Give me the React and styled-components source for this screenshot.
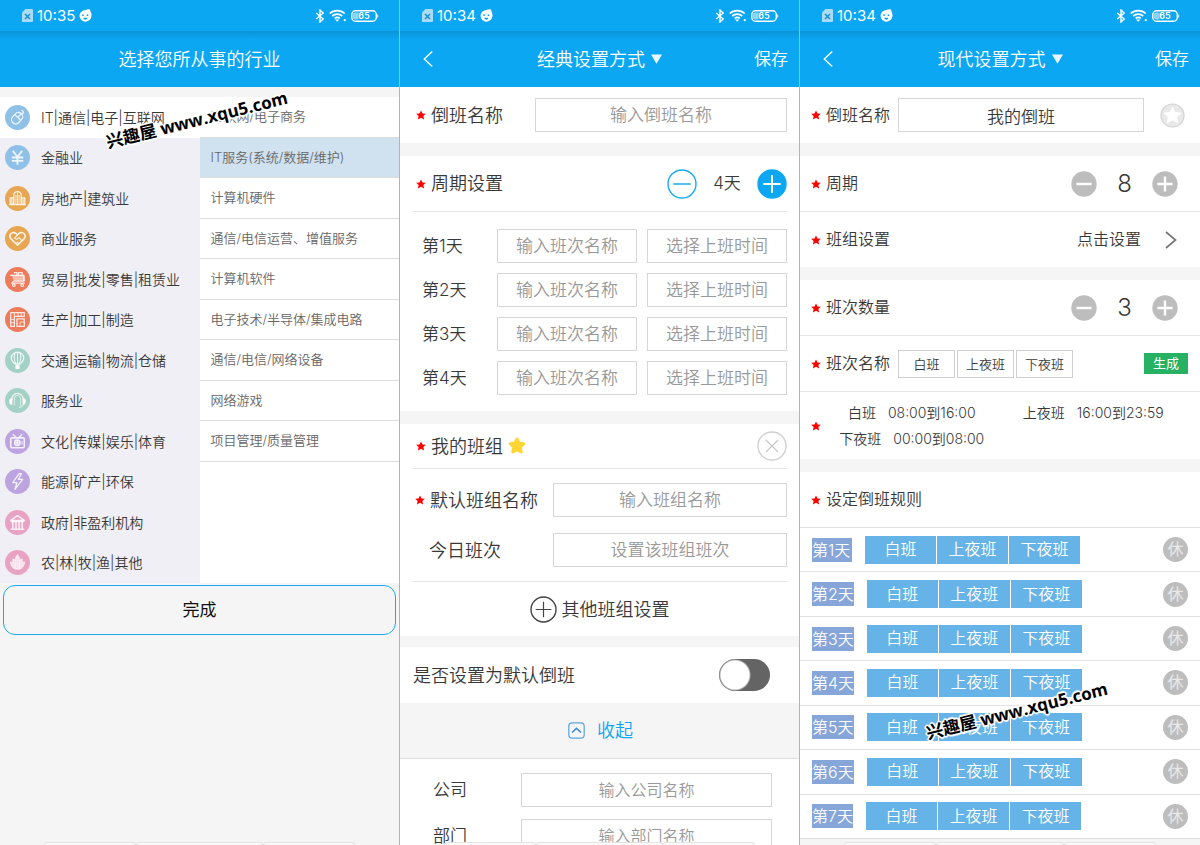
import React, { useState } from "react";
import styled, { createGlobalStyle, css } from "styled-components";

const GlobalStyle = createGlobalStyle`
  * {
    box-sizing: border-box;
  }
  body {
    margin: 0;
    background: #f5f5f5;
    color: #383838;
    font-family: Inter, "Noto Sans CJK SC", sans-serif;
    font-weight: 350;
    line-height: 27px;
  }
  button,
  input {
    margin: 0;
    padding: 0;
    border: 0;
    background: none;
    color: inherit;
    font: inherit;
  }
  button {
    cursor: pointer;
  }
  svg {
    display: block;
    flex: none;
  }
`;

const Screens = styled.main`
  display: grid;
  grid-template-columns: repeat(3, 1fr);
  height: 100vh;
  overflow: hidden;
`;

const Phone = styled.section`
  position: relative;
  min-width: 0;
  overflow: hidden;
  background: #f5f5f5;

  &:not(:last-child) {
    border-right: 1px solid #b4b4b4;
  }
`;

const StatusBar = styled.div`
  display: flex;
  align-items: center;
  justify-content: space-between;
  height: 31px;
  padding: 0 20px 0 22px;
  background: #0ca7f3;
  color: #fff;
  font-size: 15px;
  font-weight: 400;
`;

const StatusGroup = styled.div`
  display: flex;
  align-items: center;
  gap: 4px;
`;

const TopBar = styled.header`
  display: grid;
  grid-template-columns: 60px 1fr 60px;
  align-items: center;
  height: 56px;
  background: linear-gradient(#0a93d8, #0ca7f3 8px);
  color: #fff;
`;

const Title = styled.h1`
  margin: 0;
  grid-column: 2;
  text-align: center;
  font-size: 18px;
  font-weight: 350;
`;

const TitleButton = styled.button`
  display: inline-flex;
  align-items: center;
  gap: 6px;
`;

const BackButton = styled.button`
  display: flex;
  justify-content: center;
  width: 56px;
`;

const SaveButton = styled.button`
  justify-self: end;
  margin-right: 11px;
  font-size: 17px;
`;

/* ---- industry picker ---- */

const Picker = styled.div`
  display: grid;
  grid-template-columns: 1fr 1fr;
  margin-top: 10px;
  min-height: 486px;
  background: #fff;
`;

const PickerColumn = styled.div`
  display: grid;
  grid-template-rows: repeat(12, 1fr);
  background: ${(p) => (p.$main ? "#efeff5" : "#fff")};
`;

const IndustryItem = styled.button`
  display: flex;
  align-items: center;
  gap: 11px;
  padding-left: 5px;
  background: ${(p) => (p.$active ? "#fff" : "transparent")};
  font-size: 14px;
  text-align: left;
  white-space: nowrap;
`;

const SubItem = styled.button`
  padding-left: 11px;
  border-bottom: 1px solid #dcdcdc;
  background: ${(p) => (p.$active ? "#d0e1f0" : "#fff")};
  color: #666;
  font-size: 13px;
  text-align: left;
  white-space: nowrap;
`;

const DoneButton = styled.button`
  display: block;
  width: calc(100% - 6px);
  height: 50px;
  margin: 2px 3px;
  border: 1px solid #1aabee;
  border-radius: 12px;
  color: #111;
  font-size: 17px;
  font-weight: 400;
`;

/* ---- forms ---- */

const Card = styled.div`
  background: #fff;
  margin-bottom: ${(p) => p.$gap ?? 13}px;
`;

const Row = styled.div`
  display: flex;
  align-items: center;
  height: ${(p) => p.$h || 55}px;
  padding: 0 ${(p) => p.$right ?? 12}px 0 ${(p) => p.$left ?? 16}px;
  font-size: ${(p) => p.$size || 18}px;
`;

const Divider = styled.hr`
  height: 1px;
  margin: 0 ${(p) => (p.$full ? 0 : "12px")} 0 ${(p) => (p.$full ? 0 : "13px")};
  border: 0;
  background: #e6e6e6;
`;

const Label = styled.label`
  display: flex;
  align-items: center;
  gap: 5px;
  flex: none;
  width: ${(p) => (p.$w ? `${p.$w}px` : "auto")};
  padding-left: ${(p) => p.$indent || 0}px;
  white-space: nowrap;
`;

const fieldBox = css`
  flex: 1;
  min-width: 0;
  width: 100%;
  height: 34px;
  border: 1px solid #d6d6d6;
  text-align: center;
  font-size: ${(p) => p.$size || 17}px;
`;

const Field = styled.input`
  ${fieldBox}
  &::placeholder {
    color: #999;
    opacity: 1;
  }
`;

const FieldButton = styled.button`
  ${fieldBox}
  color: #999;
`;

const Stack = styled.div`
  display: flex;
  flex-direction: column;
  gap: ${(p) => p.$gap}px;
  padding: ${(p) => p.$pad};
`;

const FieldPair = styled.div`
  display: flex;
  flex: 1;
  gap: 10px;
`;

const Push = styled.div`
  display: flex;
  align-items: center;
  margin-left: auto;
`;

const Count = styled.output`
  min-width: ${(p) => (p.$big ? 55 : 60)}px;
  text-align: center;
  font-size: ${(p) => (p.$big ? 24 : 17)}px;
`;

const AddGroup = styled.button`
  display: flex;
  align-items: center;
  justify-content: center;
  gap: 5px;
  width: 100%;
  height: 54px;
  font-size: 18px;
`;

const Switch = styled.input`
  appearance: none;
  width: 51px;
  height: 32px;
  border-radius: 16px;
  background: radial-gradient(circle at 16px 16px, #fff 14px, #646464 16px);
  cursor: pointer;

  &:checked {
    background: radial-gradient(circle at 35px 16px, #fff 14px, #0ca7f3 16px);
  }
`;

const Collapse = styled.button`
  display: flex;
  align-items: center;
  justify-content: center;
  gap: 12px;
  width: 100%;
  height: 56px;
  padding-left: 2px;
  border-bottom: 1px solid #dedede;
  color: #0ca7f3;
  font-size: 18px;
`;

const IconButton = styled.button`
  flex: none;
`;

const NameField = styled.input`
  width: 57px;
  height: 28px;
  border: 1px solid #cfcfcf;
  text-align: center;
  font-size: 13px;
`;

const NameFields = styled.div`
  display: flex;
  gap: 2px;
`;

const Generate = styled.button`
  width: 44px;
  height: 21px;
  background: #27b163;
  color: #fff;
  font-size: 13px;
  font-weight: 400;
  line-height: 21px;
`;

const TimeGrid = styled.div`
  display: grid;
  flex: 1;
  grid-template-columns: 1fr 1fr;
  line-height: 26px;
  font-size: 14px;
`;

const TimeItem = styled.span`
  display: flex;
  justify-content: center;
  gap: 12px;
  white-space: nowrap;
`;

const Rules = styled.div`
  display: grid;
  grid-auto-rows: 1fr;
  min-height: 312px;
  background: #fff;
  border-top: 1px solid #e2e2e2;
`;

const RuleRow = styled.div`
  display: flex;
  align-items: center;
  padding: 0 12px;
  border-bottom: 1px solid #e2e2e2;
  color: #fff;
  font-size: 16px;
`;

const RuleTitle = styled(Row)`
  background: #fff;
`;

const DayTag = styled.span`
  min-width: 40px;
  margin-right: 13px;
  background: #86a6d9;
  line-height: 24px;
`;

const ShiftCell = styled.button`
  width: 71px;
  height: 28px;
  margin-right: 1px;
  background: #66b3e7;
`;

const RestButton = styled.button`
  width: 25px;
  height: 25px;
  margin-left: auto;
  border-radius: 50%;
  background: #bdbdbd;
  color: #e9e9e9;
  font-weight: 400;
  line-height: 25px;
`;

/* ---- things lying over the screens ---- */

const Stamp = styled.div`
  position: absolute;
  left: ${(p) => p.$x}px;
  top: ${(p) => p.$y}px;
  transform: translate(-50%, -50%) rotate(-14deg);
  color: #000;
  font-family: "Open Sans", "Noto Sans CJK SC", sans-serif;
  font-size: 17px;
  font-weight: 700;
  line-height: 24px;
  white-space: nowrap;
  text-shadow: 1px 1px 0 #fff, -1px 1px 0 #fff, 1px -1px 0 #fff, -1px -1px 0 #fff,
    0 2px 1px #fff, 0 -2px 1px #fff, 2px 0 1px #fff, -2px 0 1px #fff;
  pointer-events: none;
`;

const SheetTabs = styled.div`
  position: absolute;
  left: 44px;
  right: 44px;
  bottom: 0;
  display: grid;
  grid-template-columns: 92fr 127fr 92fr;
  height: 3px;

  span {
    border: 1px solid #e4e4e4;
    border-bottom: 0;
    border-radius: 3px 3px 0 0;
    background: #fafafa;
  }
`;

/* ---- drawings ---- */

const SimIcon = () => (
  <svg width="11" height="13" viewBox="0 0 11 13">
    <path d="M3.5 0H10a1 1 0 0 1 1 1v11a1 1 0 0 1-1 1H1a1 1 0 0 1-1-1V3.5z" fill="#a8dcf8" />
    <path d="M3 5l5 5M8 5l-5 5" stroke="#1b8fd0" strokeWidth="1.5" />
  </svg>
);

const FaceIcon = () => (
  <svg width="13" height="13" viewBox="0 0 13 13">
    <path d="M6.5 1C8 1 8.600 0.200 10 0.300c1.200 0.100 1.600 1.100 1.300 2.300 0.900 1 1.300 2.200 1.200 3.900A6 6 0 1 1 .5 6.800 6 6 0 0 1 6.500 1z" fill="#fff" />
    <circle cx="4" cy="6.200" r="0.900" fill="#0ca7f3" />
    <circle cx="8.500" cy="6.200" r="0.900" fill="#0ca7f3" />
    <path d="M4.300 8.700h4a2 2 0 0 1-4 0z" fill="#0ca7f3" />
  </svg>
);

const BluetoothIcon = () => (
  <svg width="10" height="14" viewBox="0 0 10 14">
    <path d="M1.200 4l7 6L5 13V1l3.200 3-7 6" fill="none" stroke="#fff" strokeWidth="1.400" />
  </svg>
);

const WifiIcon = () => (
  <svg width="18" height="13" viewBox="0 0 18 13">
    <g fill="none" stroke="#fff" strokeWidth="1.700">
      <path d="M0.700 4.500a11 11 0 0 1 15 0" />
      <path d="M3.200 7a7.500 7.500 0 0 1 10 0" />
      <path d="M5.600 9.400a4 4 0 0 1 5.200 0" />
    </g>
    <path d="M6 10.600h4.400l-2.200 2.200z" fill="#fff" />
    <circle cx="15.800" cy="11.200" r="1.100" fill="#fff" />
  </svg>
);

const BatteryIcon = () => (
  <svg width="28" height="12" viewBox="0 0 28 12">
    <rect x="0.800" y="0.800" width="24.500" height="10.400" rx="3.800" fill="none" stroke="#fff" strokeWidth="1.400" />
    <path d="M4 2.500h3.500v7H4a2 2 0 0 1-2-2v-3a2 2 0 0 1 2-2z" fill="#8ed3f8" />
    <path d="M26.300 4a2.500 2.500 0 0 1 0 4z" fill="#fff" />
    <text x="13" y="9.200" fill="#fff" fontSize="9" fontWeight="600" textAnchor="middle">65</text>
  </svg>
);

const BackIcon = () => (
  <svg width="10" height="16" viewBox="0 0 10 16" fill="none" stroke="#fff" strokeWidth="1.300">
    <path d="M9.300 0.500L1.200 8l8.100 7.500" />
  </svg>
);

const TriangleIcon = () => (
  <svg width="11" height="10" viewBox="0 0 11 10">
    <path d="M0 0.500h11L5.500 9.800z" fill="#e8f7ff" />
  </svg>
);

const Required = () => (
  <svg width="10" height="10" viewBox="0 0 10 10" aria-label="必填">
    <path d="M5 0.500l1.500 2.900 3.300.4-2.400 2.200.7 3.400L5 7.800 1.900 9.400l.7-3.400L.2 3.800l3.300-.4z" fill="#ff0000" />
  </svg>
);

const GoldStar = () => (
  <svg width="18" height="18" viewBox="0 0 18 18">
    <path
      d="M9 2l2 4 4.700.7-3.300 3.500.8 4.800L9 12.900 4.800 15l.8-4.800-3.300-3.500L7 6z"
      fill="#fdd535"
      stroke="#fdd535"
      strokeWidth="3"
      strokeLinejoin="round"
    />
  </svg>
);

const StarBadge = () => (
  <svg width="25" height="25" viewBox="0 0 25 25">
    <circle cx="12.500" cy="12.500" r="11.500" fill="#e9e9e9" stroke="#d2d2d2" strokeWidth="1.200" />
    <path d="M12.500 4l2.500 5.500 6 .6-4.500 4 1.300 5.900-5.300-3.100L7.200 20l1.300-5.900-4.500-4 6-.6z" fill="#fff" stroke="#fff" strokeLinejoin="round" />
  </svg>
);

const RoundIcon = ({ size, fill = "none", ring, mark, width = 1.5, kind }) => {
  const c = size / 2;
  const r = size * 0.29;
  return (
    <svg width={size} height={size} viewBox={`0 0 ${size} ${size}`} fill="none" strokeWidth={width}>
      <circle cx={c} cy={c} r={c - 1} fill={fill} stroke={ring} strokeWidth="1.400" />
      {kind === "close" ? (
        <path d={`M${c - 6} ${c - 6}L${c + 6} ${c + 6}M${c + 6} ${c - 6}L${c - 6} ${c + 6}`} stroke={mark} />
      ) : (
        <path d={`M${c - r} ${c}H${c + r}${kind === "plus" ? `M${c} ${c - r}V${c + r}` : ""}`} stroke={mark} />
      )}
    </svg>
  );
};

const CollapseIcon = () => (
  <svg width="17" height="17" viewBox="0 0 17 17" fill="none">
    <rect x="0.800" y="0.800" width="15.400" height="15.400" rx="3.500" stroke="#5aa6dc" strokeWidth="1.200" />
    <path d="M4 10.500l4.500-4.200 4.500 4.200" stroke="#3c8fd0" strokeWidth="1.600" />
  </svg>
);

const ArrowIcon = () => (
  <svg width="12" height="18" viewBox="0 0 12 18" fill="none" stroke="#777" strokeWidth="1.700">
    <path d="M1 1l9.500 8L1 17" />
  </svg>
);

const glyphs = {
  mouse: (
    <g>
      <g transform="rotate(42 12 13)">
        <rect x="7.500" y="7" width="8" height="12" rx="4" />
        <path d="M7.500 12h8M11.500 7v5" />
      </g>
      <path d="M15.500 9c.5-1.200 2.500-.6 2.200-2.200-.2-1-1.200-.9-1.500-2" />
    </g>
  ),
  yen: <path d="M7.500 5.500l4.500 6L16.500 5.500M12 11.500V19M6.500 12h11M6.500 15.200h11" strokeWidth="1.800" />,
  building: (
    <g>
      <path d="M5 17.500v-6h3v6zM16 17.500v-6h3v6zM8.500 17.500V8.500a3.500 3.200 0 0 1 7 0v9M4 17.800h16" />
      <path d="M10.500 8.500v9M13.500 8.500v9M12 6v11.500M6.500 12v5M17.500 12v5" strokeWidth="0.900" />
    </g>
  ),
  heart: (
    <g strokeWidth="1.500">
      <path d="M12 18.300l-6.500-6.200a3.700 3.700 0 0 1 0-4.600c1.700-1.900 4.400-1.500 6.500 1 2.100-2.500 4.800-2.900 6.500-1a3.700 3.700 0 0 1 0 4.600z" />
      <path d="M12 8.500l-2.700 3.200 2 1 2.200-1.500 3 3.300M11 15.500l2.500 1.300" strokeWidth="1.100" />
    </g>
  ),
  cart: (
    <g>
      <path d="M6.500 8h11.500v5.500H8.500" fill="#fff" fillOpacity="0.500" />
      <path d="M8.500 5.500h3v2.500M13 8V5.500h3.500V8M8.500 13.500l-2 2H19M18 8l.5 5.500M5 8h2" />
      <circle cx="8.500" cy="17.500" r="1.200" />
      <circle cx="16.500" cy="17.500" r="1.200" />
    </g>
  ),
  plan: (
    <g>
      <path d="M5.500 5.500h13v3.500H9V18.500H5.500zM11.500 11.500h7v7h-7z" />
      <path d="M9 5.500V9M12.500 5.500V9M15.500 5.500V9M5.500 12H9M5.500 15H9M14.500 18.500v-4h4" strokeWidth="0.800" />
    </g>
  ),
  balloon: (
    <g>
      <path d="M10 15.500C7.500 13.500 6 11.800 6 9.500a6 5.500 0 0 1 12 0c0 2.300-1.500 4-4 6z" />
      <path d="M12 4v11.500M9.500 4.800c-1 3.200-.8 7 1 10.700M14.500 4.800c1 3.200.8 7-1 10.700" strokeWidth="1" />
      <path d="M10.500 17h3v2.500h-3z" fill="#fff" />
    </g>
  ),
  headset: (
    <g>
      <path d="M6.500 12V11a5.500 5.800 0 0 1 11 0v1" />
      <path d="M6.500 10.500v5c-2.600 0-2.600-5 0-5zM17.500 10.500v5c2.600 0 2.600-5 0-5z" fill="#fff" />
      <path d="M17.500 15.500c0 2-1.500 3-4 3" strokeWidth="0.900" />
      <path d="M9 17V10.500a3 3.500 0 0 1 6 0V17" strokeWidth="0.700" />
    </g>
  ),
  tv: (
    <g>
      <rect x="5.500" y="8.500" width="13" height="9.500" rx="1.200" strokeWidth="1.500" />
      <path d="M11 8.500L7.500 5M13 8.500L16.500 5" />
      <circle cx="11.800" cy="13.200" r="2.700" fill="#fff" fillOpacity="0.400" />
      <path d="M16.300 11.500v3.500M11.800 10.500v5.400M9.200 13.200h5.200" strokeWidth="0.900" />
    </g>
  ),
  bolt: <path d="M13.500 4.500L7.500 13h4l-2 6.500 7.500-9.500h-4.200l3-5.500z" />,
  bank: (
    <g>
      <path d="M5.500 10L12 5.500 18.500 10zM5.500 18.500h13M5.500 11h13" strokeWidth="1.500" />
      <path d="M7.500 11v7M10.500 11v7M13.500 11v7M16.500 11v7" strokeWidth="1.500" />
    </g>
  ),
  plant: (
    <path
      d="M12 4.500c2 2 2.200 4 1.700 6 .8-1.200 1.600-1.700 2.800-2v3.500c.8-.4 1.600-.6 2.500-.4-.4 3.600-2.500 6-5 6.800h-4C7.500 17.600 5.400 15.200 5 11.600c.9-.2 1.700 0 2.500.4V8.500c1.200.3 2 .8 2.800 2-.5-2-.3-4 1.700-6zM10 12v6M14 12v6"
      fill="#fff"
      fillOpacity="0.700"
      strokeWidth="0.700"
    />
  ),
};

const IndustryIcon = ({ name, color }) => (
  <svg width="25" height="25" viewBox="0 0 24 24">
    <circle cx="12" cy="12" r="12" fill={color} />
    <g fill="none" stroke="#fff" strokeOpacity="0.850" strokeWidth="1.200" strokeLinejoin="round">
      {glyphs[name]}
    </g>
  </svg>
);

const industries = [
  ["mouse", "#8fc0e8", "IT|通信|电子|互联网"],
  ["yen", "#8fc0e8", "金融业"],
  ["building", "#e7a651", "房地产|建筑业"],
  ["heart", "#e7a651", "商业服务"],
  ["cart", "#ee7b5a", "贸易|批发|零售|租赁业"],
  ["plan", "#ee7b5a", "生产|加工|制造"],
  ["balloon", "#a3d1c5", "交通|运输|物流|仓储"],
  ["headset", "#a3d1c5", "服务业"],
  ["tv", "#bba4e0", "文化|传媒|娱乐|体育"],
  ["bolt", "#bba4e0", "能源|矿产|环保"],
  ["bank", "#e8a2c3", "政府|非盈利机构"],
  ["plant", "#e8a2c3", "农|林|牧|渔|其他"],
];

const subIndustries = [
  "互联网/电子商务",
  "IT服务(系统/数据/维护)",
  "计算机硬件",
  "通信/电信运营、增值服务",
  "计算机软件",
  "电子技术/半导体/集成电路",
  "通信/电信/网络设备",
  "网络游戏",
  "项目管理/质量管理",
];

const shifts = ["白班", "上夜班", "下夜班"];
const shiftTimes = ["08:00到16:00", "16:00到23:59", "00:00到08:00"];

function PhoneStatus({ time }) {
  return (
    <StatusBar>
      <StatusGroup>
        <SimIcon />
        {time}
        <FaceIcon />
      </StatusGroup>
      <StatusGroup>
        <BluetoothIcon />
        <WifiIcon />
        <BatteryIcon />
      </StatusGroup>
    </StatusBar>
  );
}

function SettingsBar({ title }) {
  return (
    <TopBar>
      <BackButton aria-label="返回">
        <BackIcon />
      </BackButton>
      <Title>
        <TitleButton>
          {title}
          <TriangleIcon />
        </TitleButton>
      </Title>
      <SaveButton>保存</SaveButton>
    </TopBar>
  );
}

function Tabs() {
  return (
    <SheetTabs>
      <span />
      <span />
      <span />
    </SheetTabs>
  );
}

function IndustryScreen() {
  const [industry, setIndustry] = useState(0);
  const [sub, setSub] = useState(1);

  return (
    <Phone>
      <PhoneStatus time="10:35" />
      <TopBar>
        <Title>选择您所从事的行业</Title>
      </TopBar>
      <Picker>
        <PickerColumn $main>
          {industries.map(([icon, color, name], index) => (
            <IndustryItem key={name} $active={index === industry} onClick={() => setIndustry(index)}>
              <IndustryIcon name={icon} color={color} />
              {name}
            </IndustryItem>
          ))}
        </PickerColumn>
        <PickerColumn>
          {subIndustries.map((name, index) => (
            <SubItem key={name} $active={index === sub} onClick={() => setSub(index)}>
              {name}
            </SubItem>
          ))}
        </PickerColumn>
      </Picker>
      <DoneButton>完成</DoneButton>
      <Tabs />
      <Stamp $x={197} $y={120}>兴趣屋 www.xqu5.com</Stamp>
    </Phone>
  );
}

function ClassicScreen() {
  const [days, setDays] = useState(4);

  return (
    <Phone>
      <PhoneStatus time="10:34" />
      <SettingsBar title="经典设置方式" />
      <Card>
        <Row $h={56}>
          <Label $w={119} htmlFor="rota-name">
            <Required />
            倒班名称
          </Label>
          <Field id="rota-name" placeholder="输入倒班名称" />
        </Row>
      </Card>
      <Card>
        <Row>
          <Label as="span">
            <Required />
            周期设置
          </Label>
          <Push>
            <IconButton aria-label="减少天数" onClick={() => setDays(Math.max(1, days - 1))}>
              <RoundIcon size={30} ring="#1aabee" mark="#1aabee" kind="minus" />
            </IconButton>
            <Count>{days}天</Count>
            <IconButton aria-label="增加天数" onClick={() => setDays(days + 1)}>
              <RoundIcon size={30} fill="#0ca7f3" ring="#0ca7f3" mark="#fff" width={2} kind="plus" />
            </IconButton>
          </Push>
        </Row>
        <Divider />
        <Stack $gap={10} $pad="17px 0 16px">
          {Array.from({ length: days }, (_, i) => (
            <Row key={i} $h={34} $left={22} $size={17}>
              <Label $w={75} htmlFor={`day-${i}`}>
                第{i + 1}天
              </Label>
              <FieldPair>
                <Field id={`day-${i}`} placeholder="输入班次名称" />
                <FieldButton>选择上班时间</FieldButton>
              </FieldPair>
            </Row>
          ))}
        </Stack>
      </Card>
      <Card $gap={11}>
        <Row $h={44}>
          <Label as="span">
            <Required />
            我的班组
            <GoldStar />
          </Label>
          <Push>
            <IconButton aria-label="删除班组">
              <RoundIcon size={30} ring="#d0d0d0" mark="#c8c8c8" width={1.2} kind="close" />
            </IconButton>
          </Push>
        </Row>
        <Divider />
        <Stack $gap={16} $pad="14px 0">
          <Row $h={34} $left={15}>
            <Label $w={138} htmlFor="group-name">
              <Required />
              默认班组名称
            </Label>
            <Field id="group-name" placeholder="输入班组名称" />
          </Row>
          <Row $h={34} $left={15}>
            <Label $w={138} $indent={14} htmlFor="group-shift">
              今日班次
            </Label>
            <Field id="group-shift" placeholder="设置该班组班次" />
          </Row>
        </Stack>
        <Divider />
        <AddGroup>
          <RoundIcon size={27} ring="#444" mark="#444" width={1.2} kind="plus" />
          其他班组设置
        </AddGroup>
      </Card>
      <Card $gap={0}>
        <Row $h={56} $left={13} $right={29}>
          <Label htmlFor="default-rota">是否设置为默认倒班</Label>
          <Push>
            <Switch id="default-rota" type="checkbox" />
          </Push>
        </Row>
      </Card>
      <Collapse>
        <CollapseIcon />
        收起
      </Collapse>
      <Card>
        <Stack $gap={12} $pad="14px 0">
          <Row $h={34} $left={33} $right={27} $size={17}>
            <Label $w={88} htmlFor="company">公司</Label>
            <Field id="company" $size={16} placeholder="输入公司名称" />
          </Row>
          <Row $h={34} $left={33} $right={27} $size={17}>
            <Label $w={88} htmlFor="department">部门</Label>
            <Field id="department" $size={16} placeholder="输入部门名称" />
          </Row>
        </Stack>
      </Card>
      <Tabs />
    </Phone>
  );
}

function CounterRow({ label, value, onChange }) {
  const look = { size: 26, fill: "#bdbdbd", ring: "#bdbdbd", mark: "#fff", width: 2.4 };
  return (
    <Row $left={11} $right={22} $size={16}>
      <Label as="span">
        <Required />
        {label}
      </Label>
      <Push>
        <IconButton aria-label={`减少${label}`} onClick={() => onChange(Math.max(1, value - 1))}>
          <RoundIcon {...look} kind="minus" />
        </IconButton>
        <Count $big>{value}</Count>
        <IconButton aria-label={`增加${label}`} onClick={() => onChange(value + 1)}>
          <RoundIcon {...look} kind="plus" />
        </IconButton>
      </Push>
    </Row>
  );
}

function ModernScreen() {
  const [cycle, setCycle] = useState(8);
  const [amount, setAmount] = useState(3);

  return (
    <Phone>
      <PhoneStatus time="10:34" />
      <SettingsBar title="现代设置方式" />
      <Card>
        <Row $h={56} $left={11} $right={15} $size={16}>
          <Label $w={87} htmlFor="modern-name">
            <Required />
            倒班名称
          </Label>
          <Field id="modern-name" defaultValue="我的倒班" />
          <Push>
            <Label as="span" $indent={16}>
              <IconButton aria-label="设为默认">
                <StarBadge />
              </IconButton>
            </Label>
          </Push>
        </Row>
      </Card>
      <Card>
        <CounterRow label="周期" value={cycle} onChange={setCycle} />
        <Divider $full />
        <Row $left={11} $right={23} $size={16}>
          <Label as="span">
            <Required />
            班组设置
          </Label>
          <Push as="button">
            点击设置
            <Label as="span" $indent={24}>
              <ArrowIcon />
            </Label>
          </Push>
        </Row>
      </Card>
      <Card>
        <CounterRow label="班次数量" value={amount} onChange={setAmount} />
        <Divider $full />
        <Row $left={11} $size={16}>
          <Label as="span" $w={87}>
            <Required />
            班次名称
          </Label>
          <NameFields>
            {shifts.map((name) => (
              <NameField key={name} aria-label={`班次名称 ${name}`} defaultValue={name} />
            ))}
          </NameFields>
          <Push>
            <Generate>生成</Generate>
          </Push>
        </Row>
        <Divider $full />
        <Row $h={67} $left={11} $right={16}>
          <Required />
          <TimeGrid>
            {shifts.map((name, index) => (
              <TimeItem key={name}>
                <span>{name}</span>
                <span>{shiftTimes[index]}</span>
              </TimeItem>
            ))}
          </TimeGrid>
        </Row>
      </Card>
      <RuleTitle $left={11} $size={16}>
        <Label as="span">
          <Required />
          设定倒班规则
        </Label>
      </RuleTitle>
      <Rules>
        {Array.from({ length: 7 }, (_, i) => (
          <RuleRow key={i}>
            <DayTag>第{i + 1}天</DayTag>
            {shifts.map((name) => (
              <ShiftCell key={name}>{name}</ShiftCell>
            ))}
            <RestButton>休</RestButton>
          </RuleRow>
        ))}
      </Rules>
      <Tabs />
      <Stamp $x={217} $y={711}>兴趣屋 www.xqu5.com</Stamp>
    </Phone>
  );
}

function App() {
  return (
    <>
      <GlobalStyle />
      <Screens>
        <IndustryScreen />
        <ClassicScreen />
        <ModernScreen />
      </Screens>
    </>
  );
}

export default App;
